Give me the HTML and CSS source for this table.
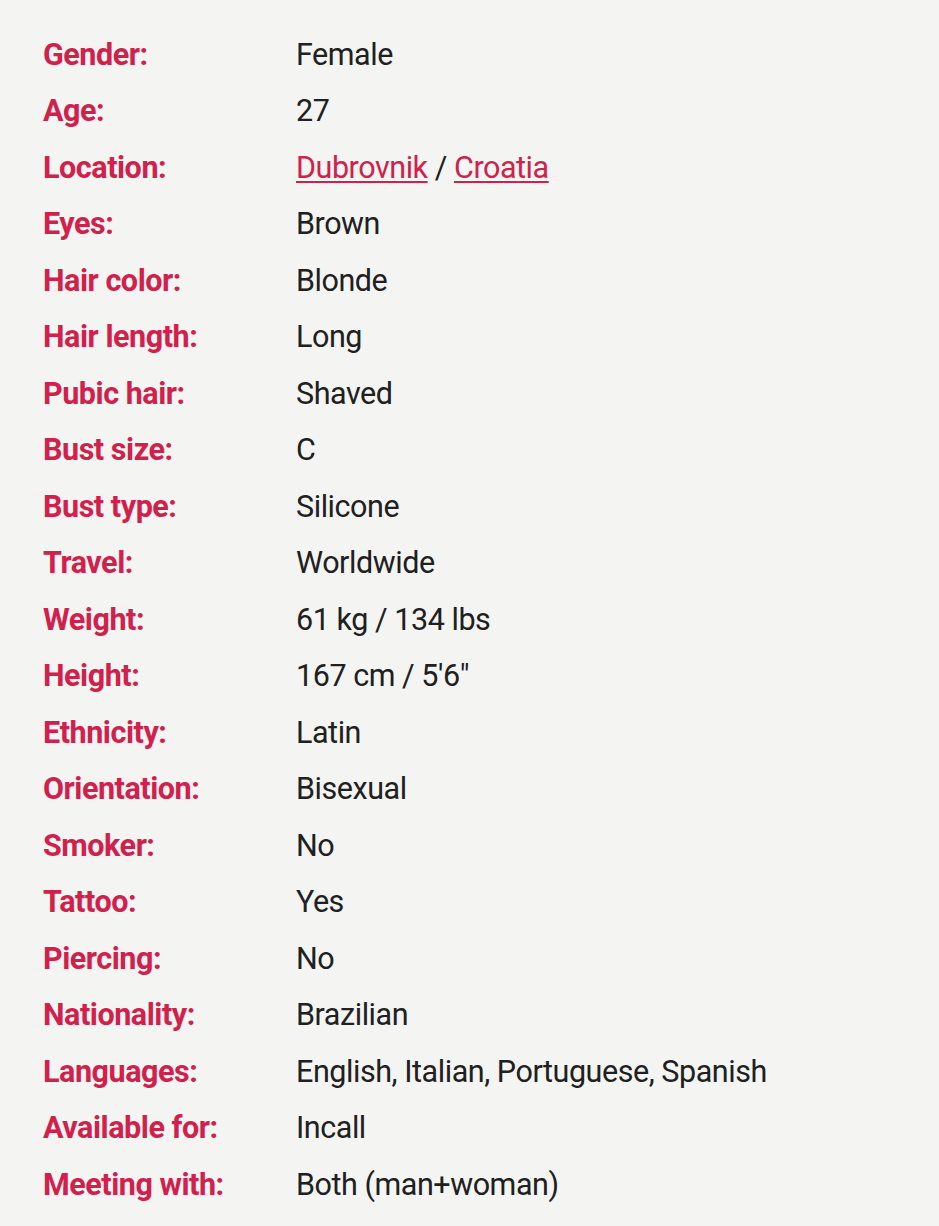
FILE: index.html
```html
<!DOCTYPE html>
<html lang="en">
<head>
<meta charset="utf-8">
<link rel="stylesheet" href="styles.css">
<title>Profile</title>
</head>
<body>
<dl class="details">
  <dt>Gender:</dt><dd>Female</dd>
  <dt>Age:</dt><dd>27</dd>
  <dt>Location:</dt><dd><a href="#">Dubrovnik</a> / <a href="#">Croatia</a></dd>
  <dt>Eyes:</dt><dd>Brown</dd>
  <dt>Hair color:</dt><dd>Blonde</dd>
  <dt>Hair length:</dt><dd>Long</dd>
  <dt>Pubic hair:</dt><dd>Shaved</dd>
  <dt>Bust size:</dt><dd>C</dd>
  <dt>Bust type:</dt><dd>Silicone</dd>
  <dt>Travel:</dt><dd>Worldwide</dd>
  <dt>Weight:</dt><dd>61 kg / 134 lbs</dd>
  <dt>Height:</dt><dd>167 cm / 5'6"</dd>
  <dt>Ethnicity:</dt><dd>Latin</dd>
  <dt>Orientation:</dt><dd>Bisexual</dd>
  <dt>Smoker:</dt><dd>No</dd>
  <dt>Tattoo:</dt><dd>Yes</dd>
  <dt>Piercing:</dt><dd>No</dd>
  <dt>Nationality:</dt><dd>Brazilian</dd>
  <dt>Languages:</dt><dd>English, Italian, Portuguese, Spanish</dd>
  <dt>Available for:</dt><dd>Incall</dd>
  <dt>Meeting with:</dt><dd>Both (man+woman)</dd>
</dl>
</body>
</html>
```
FILE: styles.css
```css
html, body {
  margin: 0;
  padding: 0;
  background: #f4f4f3;
}
body {
  font-family: Roboto, "Liberation Sans", sans-serif;
  color: #222;
}
.details {
  margin: 0;
  padding: 26px 0 0 43px;
  display: grid;
  grid-template-columns: 253px auto;
  grid-auto-rows: 56.5px;
  align-items: center;
  font-size: 30.5px;
  letter-spacing: -0.45px;
}
.details dt {
  font-weight: 700;
  color: #d0214d;
}
.details dd {
  margin: 0;
  color: #202020;
}
.details a {
  color: #d0214d;
  text-decoration: underline;
  text-underline-offset: 3px;
  text-decoration-thickness: 2px;
}
```
